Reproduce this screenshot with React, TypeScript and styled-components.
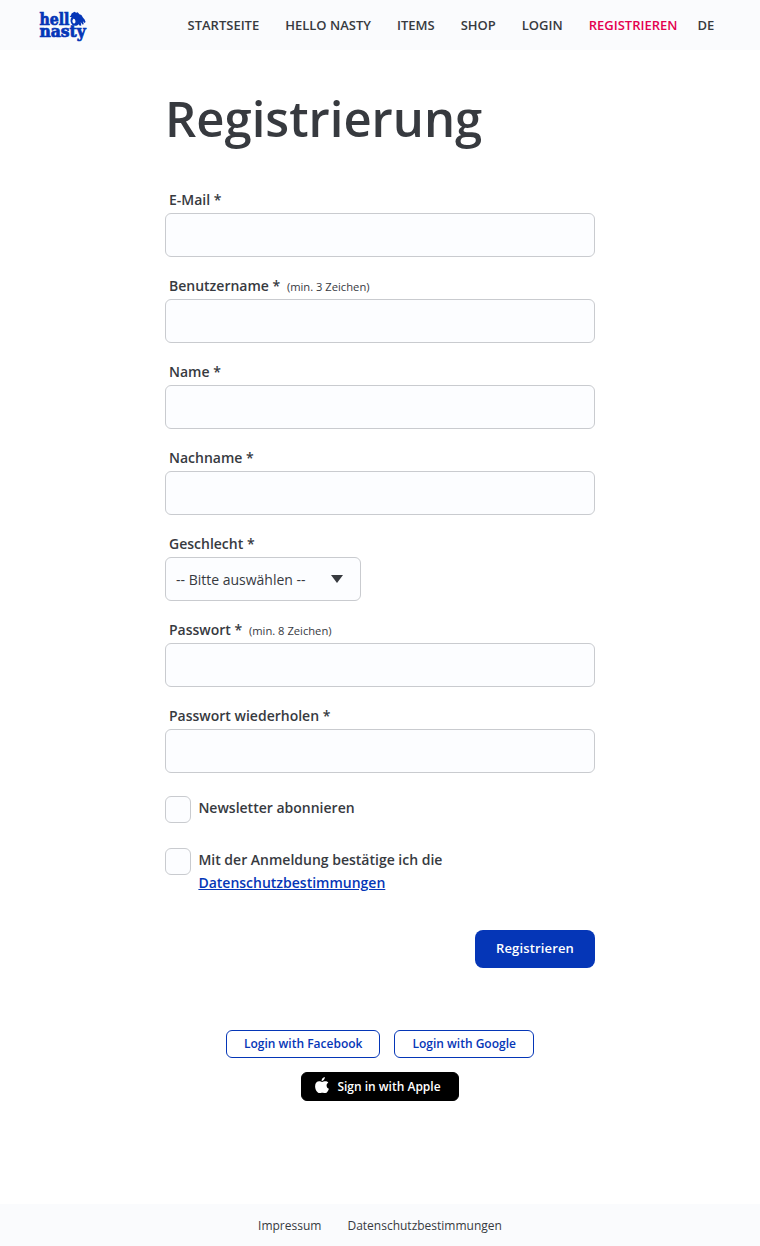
import React from 'react';
import styled, { createGlobalStyle } from 'styled-components';

const ink = '#373a3f';
const blue = '#0536b7';
const line = '#c9cbcf';

const GlobalStyle = createGlobalStyle`
  *, *::before, *::after { box-sizing: border-box; }
  body {
    margin: 0;
    background: #fff;
    color: ${ink};
    font-family: 'Open Sans', 'Liberation Sans', sans-serif;
    font-size: 14px;
  }
`;

const Page = styled.div`
  display: flex;
  flex-direction: column;
  min-height: 1246px;
`;

const Header = styled.header`
  display: flex;
  align-items: center;
  justify-content: space-between;
  height: 50px;
  padding: 0 45.8px 0 38px;
  background: #fafbfd;
`;

const LogoSvg = styled.svg`
  display: block;
  width: 50px;
  height: 32px;
  margin-top: 2px;
`;

const Nav = styled.nav`
  display: flex;
  gap: 26px;
`;

const NavLink = styled.a<{ $active?: boolean; $tight?: boolean }>`
  color: ${(p) => (p.$active ? '#e4004f' : ink)};
  font-size: 13px;
  font-weight: 600;
  line-height: 18px;
  text-decoration: none;
  margin-left: ${(p) => (p.$tight ? '-6px' : '0')};
`;

const Main = styled.main`
  flex: 1;
  width: 430px;
  margin: 0 auto;
`;

const Title = styled.h1`
  margin: 34px 0 38px;
  font-size: 49px;
  font-weight: 600;
  line-height: 68px;
`;

const Form = styled.form`
  display: flex;
  flex-direction: column;
`;

const Field = styled.div`
  display: flex;
  flex-direction: column;
  height: 86px;
`;

const Label = styled.label`
  height: 23px;
  padding-left: 4px;
  font-weight: 600;
  line-height: 20px;
`;

const Hint = styled.small`
  margin-left: 6.700px;
  font-size: 11.2px;
  font-weight: 400;
`;

const Input = styled.input`
  width: 100%;
  height: 44px;
  padding: 0 10px;
  border: 1px solid ${line};
  border-radius: 6px;
  background: #fcfdff;
  font: inherit;
  outline: none;
`;

const Select = styled.button`
  display: flex;
  align-items: center;
  justify-content: space-between;
  width: 195.5px;
  height: 44px;
  padding: 0 16.6px 0 10px;
  border: 1px solid ${line};
  border-radius: 6px;
  background: #fcfdff;
  color: ${ink};
  font: inherit;
`;

const Caret = styled.svg`
  width: 12px;
  height: 8px;
  fill: ${ink};
`;

const Checks = styled.div`
  display: flex;
  flex-direction: column;
  padding-top: 4px;
`;

const CheckRow = styled.label<{ $tall?: boolean }>`
  display: flex;
  gap: 7px;
  height: ${(p) => (p.$tall ? '81.5px' : '52px')};
  font-weight: 600;
  line-height: 23px;
`;

const Checkbox = styled.input`
  appearance: none;
  flex: none;
  width: 26.4px;
  height: 26.4px;
  margin: 0.3px 0 0;
  border: 1px solid ${line};
  border-radius: 6px;
  background: #fcfdff;
`;

const Terms = styled.a`
  color: ${blue};
  text-decoration: underline;
`;

const Submit = styled.button`
  align-self: flex-end;
  width: 120px;
  height: 38px;
  padding: 0 0 2px;
  border: 0;
  border-radius: 8px;
  background: ${blue};
  color: #fff;
  font: 600 13px 'Open Sans', sans-serif;
  letter-spacing: 0.15px;
`;

const Social = styled.div`
  display: flex;
  flex-wrap: wrap;
  justify-content: center;
  gap: 14px;
  margin-top: 62px;
`;

const SocialButton = styled.button<{ $width: number; $dark?: boolean }>`
  display: flex;
  align-items: center;
  justify-content: center;
  gap: 8px;
  width: ${(p) => p.$width}px;
  height: 28.5px;
  padding: 0 ${(p) => (p.$dark ? '4px' : '0')} 0 0;
  border: 1px solid ${(p) => (p.$dark ? '#000' : blue)};
  border-radius: 6px;
  background: ${(p) => (p.$dark ? '#000' : '#fff')};
  color: ${(p) => (p.$dark ? '#fff' : blue)};
  font: 600 12px 'Open Sans', sans-serif;
`;

const AppleSvg = styled.svg`
  width: 14px;
  height: 17px;
  margin-top: -1px;
  fill: #fff;
`;

const Footer = styled.footer`
  display: flex;
  justify-content: center;
  gap: 26px;
  height: 42px;
  background: #fafbfd;
  font-size: 12px;
  line-height: 43px;
`;

const Logo = () => (
  <LogoSvg viewBox="0 0 50 32" fill={blue} role="img" aria-label="hello nasty">
    <g
      fontFamily="'DejaVu Serif Condensed', 'DejaVu Serif', serif"
      fontWeight="700"
      fontSize="17"
      stroke={blue}
      strokeWidth="0.7"
    >
      <text x="1.5" y="15" textLength="30" lengthAdjust="spacingAndGlyphs">hell</text>
      <text x="1.5" y="26.5" textLength="46.3" lengthAdjust="spacingAndGlyphs">nasty</text>
    </g>
    <path
      fillRule="evenodd"
      d="M31.600 7 33 5.200l.6-1.800 2.800-1.700 1.800 1 1.500-.4 1.700 1.900 2 .9 1.500 2.500 1.700 2 1 2.500-1.200.8-1.600-1.800 1 3.200-1.400.3-1.700-2.500.6 3.300-1.500.4-1.200-1.500c-1.600 1.900-4.600 2-6.400.4-2-1.800-2.300-5.300-.6-7.700ZM35 9.200c-.9 1-.8 3.200.4 4 1.400.9 2.300-.8 2-2.300-.3-1.500-1.400-2.700-2.400-1.700Z"
    />
  </LogoSvg>
);

const links = ['STARTSEITE', 'HELLO NASTY', 'ITEMS', 'SHOP', 'LOGIN', 'REGISTRIEREN', 'DE'];

const TextField = ({ id, label, hint, type = 'text' }: { id: string; label: string; hint?: string; type?: string }) => (
  <Field>
    <Label htmlFor={id}>
      {label} *{hint && <Hint>{hint}</Hint>}
    </Label>
    <Input id={id} type={type} />
  </Field>
);

export default function App() {
  return (
    <Page>
      <GlobalStyle />
      <Header>
        <Logo />
        <Nav>
          {links.map((l) => (
            <NavLink key={l} $active={l === 'REGISTRIEREN'} $tight={l === 'DE'}>
              {l}
            </NavLink>
          ))}
        </Nav>
      </Header>
      <Main>
        <Title>Registrierung</Title>
        <Form>
          <TextField id="email" label="E-Mail" />
          <TextField id="user" label="Benutzername" hint="(min. 3 Zeichen)" />
          <TextField id="first" label="Name" />
          <TextField id="last" label="Nachname" />
          <Field>
            <Label>Geschlecht *</Label>
            <Select type="button">
              -- Bitte auswählen --
              <Caret viewBox="0 0 12 8">
                <path d="M0 0h12L6 8Z" />
              </Caret>
            </Select>
          </Field>
          <TextField id="pw" label="Passwort" hint="(min. 8 Zeichen)" type="password" />
          <TextField id="pw2" label="Passwort wiederholen" type="password" />
          <Checks>
            <CheckRow>
              <Checkbox type="checkbox" />
              <span>Newsletter abonnieren</span>
            </CheckRow>
            <CheckRow $tall>
              <Checkbox type="checkbox" />
              <span>
                Mit der Anmeldung bestätige ich die
                <br />
                <Terms>Datenschutzbestimmungen</Terms>
              </span>
            </CheckRow>
          </Checks>
          <Submit type="button">Registrieren</Submit>
        </Form>
        <Social>
          <SocialButton $width={154.4}>Login with Facebook</SocialButton>
          <SocialButton $width={139.6}>Login with Google</SocialButton>
          <SocialButton $width={158} $dark>
            <AppleSvg viewBox="0 0 14 17">
              <path d="M9.800 0c.1 1.100-.3 2-.9 2.700-.6.8-1.500 1.200-2.300 1.200-.1-1 .3-1.900.9-2.600C8.100.600 9 .1 9.800 0ZM13.300 5.700c-1.200.8-1.800 1.700-1.700 3 .1 1.500.9 2.500 2.300 3-.6 1.700-1.800 4.300-3.500 4.400-1.100.1-1.700-.4-3-.4s-1.900.4-2.900.4C2.300 16.100.100 12.500.100 9.200c0-3 1.900-4.900 4.100-4.900 1.200 0 2.200.7 2.900.7.7 0 1.900-.7 3.300-.7 1.100 0 2.200.5 2.900 1.400Z" />
            </AppleSvg>
            Sign in with Apple
          </SocialButton>
        </Social>
      </Main>
      <Footer>
        <span>Impressum</span>
        <span>Datenschutzbestimmungen</span>
      </Footer>
    </Page>
  );
}
